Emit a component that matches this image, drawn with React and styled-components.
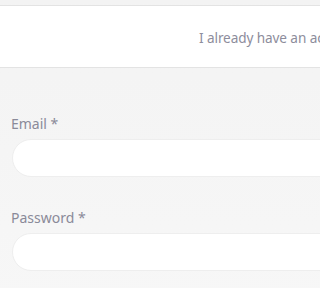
import React from 'react'
import styled, { createGlobalStyle } from 'styled-components'

const Global = createGlobalStyle`
  html, body {
    margin: 0;
    padding: 0;
    width: 100%;
    overflow: hidden;
    background: #f5f5f5;
  }
  body {
    font-family: "Noto Sans", "Open Sans", sans-serif;
  }
`

const Page = styled.div`
  width: 100vw;
  max-width: 100vw;
  min-height: 100vh;
  overflow: hidden;
  padding-top: 5px;
  box-sizing: border-box;
  background: linear-gradient(#f3f3f3, #f7f7f7);
`

const Header = styled.header`
  display: flex;
  align-items: center;
  height: 61px;
  padding-left: 12px;
  overflow: hidden;
  background: #fff;
  border-top: 1px solid #e3e3e3;
  border-bottom: 1px solid #e3e3e3;
`

const Brand = styled.div`
  flex: 0 0 187px;
`

const LoginLink = styled.a`
  flex: 0 0 auto;
  font-size: 13.6px;
  letter-spacing: -0.1px;
  color: #8d8d9c;
  white-space: nowrap;
  text-decoration: none;
  padding-top: 2px;
`

const Form = styled.form`
  display: flex;
  flex-direction: column;
  padding: 46px 0 0 11px;
  overflow: hidden;
`

const Field = styled.div`
  display: flex;
  flex-direction: column;
  gap: 5px;
  margin-bottom: 31px;
`

const Label = styled.label`
  font-size: 14px;
  line-height: 20px;
  color: #8a8a99;
`

const Input = styled.input`
  box-sizing: border-box;
  width: calc(100% + 40px);
  height: 38px;
  margin-left: 1px;
  border: 1px solid #eeeeee;
  border-radius: 19px;
  background: #fff;
  outline: none;
  padding: 0 18px;
  font: inherit;
`

export default function App() {
  return (
    <Page>
      <Global />
      <Header>
        <Brand />
        <LoginLink href="#">I already have an account</LoginLink>
      </Header>
      <Form>
        <Field>
          <Label>Email *</Label>
          <Input type="email" />
        </Field>
        <Field>
          <Label>Password *</Label>
          <Input type="password" />
        </Field>
      </Form>
    </Page>
  )
}
